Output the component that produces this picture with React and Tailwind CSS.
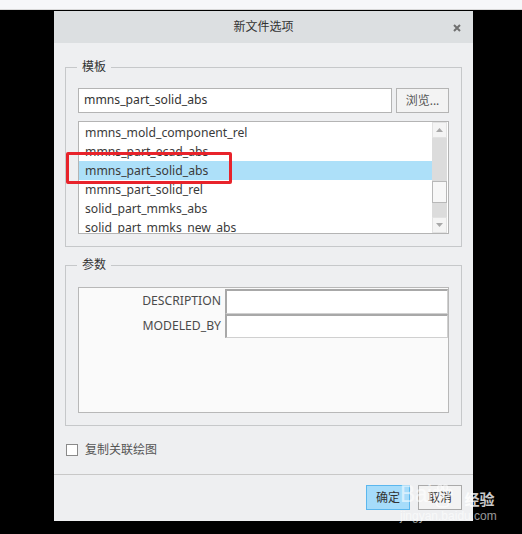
import React from "react"

const templates = [
  "mmns_mold_component_rel",
  "mmns_part_ecad_abs",
  "mmns_part_solid_abs",
  "mmns_part_solid_rel",
  "solid_part_mmks_abs",
  "solid_part_mmks_new_abs",
]

const params = ["DESCRIPTION", "MODELED_BY"]

// group box with a caption sitting on the top border
const GroupBox = ({ title, className, children }) => (
  <div className={`relative border border-[#c6c8ca] ${className}`}>
    <span className="absolute -top-[10px] left-[11px] px-[5px] bg-[#eeeff1] text-[12px] leading-[18px] text-[#333]">
      {title}
    </span>
    {children}
  </div>
)

const App = () => {
  const selected = 2

  return (
    <div className="relative w-[522px] h-[534px] bg-black overflow-hidden font-['Noto_Sans','Noto_Sans_CJK_SC',sans-serif] text-[#3a3a3a]">
      {/* top strip */}
      <div className="h-[10px] bg-[#f6f7f9] border-b border-[#d8d8d8]" />

      <div className="pl-[54px] pt-[1px]">
        <div className="w-[419px] h-[510px] bg-[#eeeff1] flex flex-col">
          {/* Title bar */}
          <div className="h-[32px] bg-[#dcdfe1] flex items-center justify-center relative">
            <span className="text-[12px] text-[#333]">新文件选项</span>
            <svg className="absolute right-[12px] top-[13px]" width="8" height="8" viewBox="0 0 8 8">
              <path d="M1 1L7 7M7 1L1 7" stroke="#707070" strokeWidth="2" />
            </svg>
          </div>

          {/* Body */}
          <div className="flex-1 px-[11px] pt-[24px]">
            <GroupBox title="模板" className="h-[180px] px-[12px] pt-[20px]">
              <div className="flex gap-[4px] h-[25px]">
                <div className="w-[314px] h-[25px] bg-white border border-[#b4b4b4] flex items-center px-[5px] text-[12.2px] text-[#333]">
                  mmns_part_solid_abs
                </div>
                <button className="w-[53px] h-[25px] border border-[#b4b4b4] bg-[#f3f3f3] text-[12px] text-[#555]">
                  浏览...
                </button>
              </div>

              <div className="mt-[8px] w-[371px] h-[113px] bg-white border border-[#b4b4b4] flex overflow-hidden">
                <div className="flex-1 pt-[1px]">
                  {templates.map((t, i) => (
                    <div
                      key={t}
                      className={`h-[19px] leading-[19px] pl-[6px] text-[12.2px] text-[#3a3a3a] ${
                        i === selected ? "bg-[#ade0f9]" : ""
                      }`}
                    >
                      {t}
                    </div>
                  ))}
                </div>
                {/* scrollbar */}
                <div className="w-[15px] mr-[1px] bg-[#dcdcdc] flex flex-col">
                  <div className="h-[16px] bg-[#f4f4f4] border border-[#e2e2e2] flex items-center justify-center">
                    <svg width="7" height="4" viewBox="0 0 7 4">
                      <path d="M0 4L3.5 0L7 4Z" fill="#a8a8a8" />
                    </svg>
                  </div>
                  <div className="mt-[43px] h-[22px] bg-[#f7f7f7] border border-[#b8b8b8]" />
                  <div className="mt-auto h-[16px] bg-[#f4f4f4] border border-[#e2e2e2] flex items-center justify-center">
                    <svg width="7" height="4" viewBox="0 0 7 4">
                      <path d="M0 0L3.5 4L7 0Z" fill="#a8a8a8" />
                    </svg>
                  </div>
                </div>
              </div>
            </GroupBox>

            <GroupBox title="参数" className="mt-[18px] h-[161px] px-[12px] pt-[21px]">
              <div className="w-[371px] h-[126px] bg-[#fafafa] border border-[#b8b8b8] pt-[1px]">
                {params.map((p) => (
                  <div key={p} className="flex h-[24.5px]">
                    <div className="w-[146px] pr-[4px] text-right text-[12.2px] leading-[24px] text-[#4a4a4a]">
                      {p}
                    </div>
                    <div className="w-[223px] bg-white border-t-2 border-l-2 border-[#a8a8a8] border-r border-b border-r-[#d0d0d0] border-b-[#d0d0d0]" />
                  </div>
                ))}
              </div>
            </GroupBox>

            <label className="mt-[15px] ml-[1px] flex items-center gap-[7px]">
              <span className="w-[12px] h-[12px] bg-white border border-[#8a8a8a]" />
              <span className="text-[12px] text-[#555]">复制关联绘图</span>
            </label>
          </div>

          {/* Footer */}
          <div className="h-[47px] border-t border-[#c8c8c8] flex justify-end gap-[8px] pr-[11px] pt-[10px]">
            <button className="w-[44px] h-[25px] bg-[#a6dcfa] border border-[#5bb7ee] text-[12px] text-[#333]">
              确定
            </button>
            <button className="w-[44px] h-[25px] bg-[#f3f3f3] border border-[#aaaaaa] text-[12px] text-[#333]">
              取消
            </button>
          </div>
        </div>
      </div>

      {/* red annotation box */}
      <div className="absolute left-[66px] top-[152px] w-[166px] h-[32px] border-[3px] border-[#e8232b] rounded-[2px]" />

      {/* watermark */}
      <div className="absolute left-[400px] top-[476px] flex flex-col items-start text-white/55 pointer-events-none">
        <div className="flex items-end h-[32px]">
          <span className="text-[23px] leading-[24px] font-['Liberation_Sans',sans-serif] tracking-tight mb-[2px]">Bai</span>
          <svg width="26" height="24" viewBox="0 0 22 22" className="-ml-[3px]">
            <g fill="none" stroke="rgba(255,255,255,0.55)" strokeWidth="1.4">
              <ellipse cx="5" cy="8" rx="2.2" ry="2.8" />
              <ellipse cx="9" cy="3.5" rx="2" ry="2.5" />
              <ellipse cx="14" cy="3.5" rx="2" ry="2.5" />
              <ellipse cx="18" cy="8" rx="2.2" ry="2.8" />
              <path d="M6 18c0-4 3-7 5.5-7s5.5 3 5.5 7c0 2-2 3-5.5 3S6 20 6 18z" />
            </g>
          </svg>
          <span className="text-[15px] leading-[18px] ml-[10px] font-bold text-white/80">经验</span>
        </div>
        <span className="text-[12px] leading-[14px] mt-[1px] font-['Liberation_Sans',sans-serif] text-white/60">jingyan.baidu.com</span>
      </div>
    </div>
  )
}

export default App
